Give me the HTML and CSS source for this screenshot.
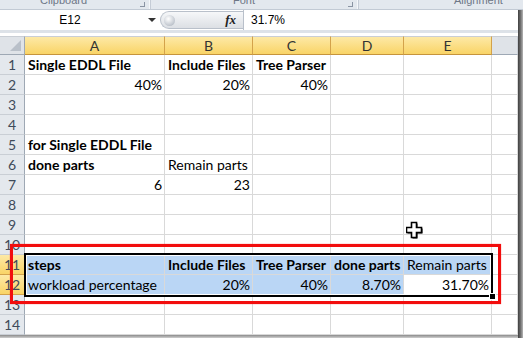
FILE: index.html
```html
<!DOCTYPE html>
<html lang="en">
<head>
    <meta charset="UTF-8">
    <title>Workload sheet</title>
    <link rel="stylesheet" href="styles.css">
</head>
<body>

    <div class="ribbon">
        <div class="group g-clip"><span class="label">Clipboard</span><span class="launcher"></span></div>
        <div class="group g-font"><span class="label">Font</span><span class="launcher"></span></div>
        <div class="group g-align"><span class="label">Alignment</span></div>
    </div>

    <div class="window">
        <div class="main">
            <div class="formula-bar">
                <div class="name-box"><span class="name">E12</span><span class="arrow"></span></div>
                <div class="grip"><span class="knob"></span><span class="fx">fx</span></div>
                <div class="formula">31.7%</div>
            </div>

            <div class="sheet">
                <div class="corner"><span class="tri"></span></div>
                <div class="ch">A</div><div class="ch">B</div><div class="ch">C</div><div class="ch">D</div><div class="ch">E</div><div class="ch plain"></div>

                <div class="rh">1</div><div class="c b">Single EDDL File</div><div class="c b">Include Files</div><div class="c b">Tree Parser</div><div class="c"></div><div class="c"></div><div class="c"></div>
                <div class="rh">2</div><div class="c r">40%</div><div class="c r">20%</div><div class="c r">40%</div><div class="c"></div><div class="c"></div><div class="c"></div>
                <div class="rh">3</div><div class="c"></div><div class="c"></div><div class="c"></div><div class="c"></div><div class="c"></div><div class="c"></div>
                <div class="rh">4</div><div class="c"></div><div class="c"></div><div class="c"></div><div class="c"></div><div class="c"></div><div class="c"></div>
                <div class="rh">5</div><div class="c b">for Single EDDL File</div><div class="c"></div><div class="c"></div><div class="c"></div><div class="c"></div><div class="c"></div>
                <div class="rh">6</div><div class="c b">done parts</div><div class="c">Remain parts</div><div class="c"></div><div class="c"></div><div class="c"></div><div class="c"></div>
                <div class="rh">7</div><div class="c r">6</div><div class="c r">23</div><div class="c"></div><div class="c"></div><div class="c"></div><div class="c"></div>
                <div class="rh">8</div><div class="c"></div><div class="c"></div><div class="c"></div><div class="c"></div><div class="c"></div><div class="c"></div>
                <div class="rh">9</div><div class="c"></div><div class="c"></div><div class="c"></div><div class="c"></div><div class="c"></div><div class="c"></div>
                <div class="rh">10</div><div class="c"></div><div class="c"></div><div class="c"></div><div class="c"></div><div class="c"></div><div class="c"></div>
                <div class="rh on">11</div><div class="c b sel">steps</div><div class="c b sel">Include Files</div><div class="c b sel">Tree Parser</div><div class="c b sel">done parts</div><div class="c sel">Remain parts</div><div class="c"></div>
                <div class="rh on">12</div><div class="c sel">workload percentage</div><div class="c r sel">20%</div><div class="c r sel">40%</div><div class="c r sel">8.70%</div><div class="c r">31.70%</div><div class="c"></div>
                <div class="rh">13</div><div class="c"></div><div class="c"></div><div class="c"></div><div class="c"></div><div class="c"></div><div class="c"></div>
                <div class="rh">14</div><div class="c"></div><div class="c"></div><div class="c"></div><div class="c"></div><div class="c"></div><div class="c"></div>

                <!-- selected range A11:E12 -->
                <div class="selection"><span class="handle"></span></div>
                <!-- red highlight drawn over the screenshot -->
                <div class="callout"></div>
                <!-- mouse pointer -->
                <svg class="cursor" width="18" height="18" viewBox="0 0 18 18">
                    <path d="M6.5 2.5h5v5h5v5h-5v5h-5v-5h-5v-5h5z" fill="#000"/>
                    <path d="M5.5 1.5h5v5h5v5h-5v5h-5v-5h-5v-5h5z" fill="#fff" stroke="#000" stroke-width="1.6"/>
                </svg>
            </div>
            <div class="shadow"></div>
        </div>
        <div class="edge"></div>
    </div>

</body>
</html>
```

FILE: styles.css
```css
body {
    margin: 0;
    width: 523px;
    height: 338px;
    overflow: hidden;
    background: #fff;
    font-family: "Lato", "Liberation Sans", sans-serif;
}

/* ribbon, only the bottom edge is visible */
.ribbon {
    display: flex;
    height: 9px;
    background: #e3e8ee;
    border-bottom: 1px solid #c2cad4;
    overflow: hidden;
    font: 11px "Liberation Sans", sans-serif;
    color: #6d7686;
}
.group {
    position: relative;
    box-sizing: border-box;
    border-right: 1px solid #c5ccd6;
    box-shadow: inset -1px 0 0 #f5f7fa;
}
.g-clip { width: 151px; padding-left: 40px; }
.g-font { width: 208px; padding-left: 82px; }
.g-align { flex: 1; padding-left: 95px; border-right: none; box-shadow: none; }
.label {
    display: block;
    margin-top: -7px;
    line-height: 14px;
}
.launcher {
    position: absolute;
    right: 5px;
    bottom: 2px;
    width: 4px;
    height: 4px;
    border-right: 1px solid #8a94a3;
    border-bottom: 1px solid #8a94a3;
}

.window {
    display: flex;
}
.main {
    width: 518px;
}
.edge {
    width: 5px;
    background: linear-gradient(to right, #3f3f3f, #6e6e6e 50%, #b5b5b5);
}

/* formula bar */
.formula-bar {
    display: flex;
    height: 20px;
    border-bottom: 3px solid #dde2e8;
    margin-bottom: 3px;
}
.name-box {
    width: 158px;
    display: flex;
    align-items: center;
    font: 12px "Liberation Sans", sans-serif;
    color: #000;
}
.name {
    width: 140px;
    text-align: center;
}
.arrow {
    margin-left: 8px;
    width: 0;
    height: 0;
    border-left: 4px solid transparent;
    border-right: 4px solid transparent;
    border-top: 4px solid #333;
}
.grip {
    width: 83px;
    height: 18px;
    margin-left: 2px;
    align-self: center;
    box-sizing: border-box;
    display: flex;
    align-items: center;
    border: 1px solid #b9c0ca;
    border-right: none;
    border-radius: 9px 0 0 9px;
    background: linear-gradient(#f6f7f9, #dcdfe4);
}
.knob {
    width: 11px;
    height: 11px;
    margin-left: 3px;
    border-radius: 50%;
    background: radial-gradient(circle at 40% 35%, #fff, #c9ced5 60%, #a3abb6);
}
.fx {
    margin-left: auto;
    margin-right: 7px;
    font: italic bold 13px "Liberation Serif", serif;
    color: #222;
}
.formula {
    flex: 1;
    border-left: 1px solid #b9c0ca;
    padding-left: 7px;
    font: 12px "Liberation Sans", sans-serif;
    line-height: 20px;
    color: #000;
}

/* grid */
.sheet {
    position: relative;
    display: grid;
    grid-template-columns: 25px 140px 88px 78px 73px 88px 26px;
    grid-template-rows: 19px repeat(14, 20px);
}
.sheet > div {
    box-sizing: border-box;
}
.corner {
    position: relative;
    background: #dfe3e8;
    border-top: 1px solid #c9ced5;
    border-right: 1px solid #9ea8b4;
    border-bottom: 1px solid #9ea8b4;
}
.tri {
    position: absolute;
    right: 3px;
    bottom: 3px;
    width: 0;
    height: 0;
    border-left: 11px solid transparent;
    border-bottom: 11px solid #b9c0c9;
}
.ch {
    text-align: center;
    font-size: 14px;
    line-height: 17px;
    color: #333;
    background: linear-gradient(#fde9a6, #f9d467);
    border-top: 1px solid #c9ced5;
    border-right: 1px solid #d3a24b;
    border-bottom: 1px solid #c6943c;
}
.ch.plain {
    background: #dfe3e8;
    border-right: 1px solid #c9ced5;
    border-bottom: 1px solid #9ea8b4;
}
.rh {
    text-align: center;
    font-size: 14px;
    line-height: 19px;
    color: #3f4b5a;
    background: #e4e8ed;
    border-right: 1px solid #9ea8b4;
    border-bottom: 1px solid #c9ced5;
}
.rh.on {
    background: linear-gradient(#fde9a6, #f9d467);
    border-right: 1px solid #c6943c;
    border-bottom: 1px solid #d3a24b;
}
.c {
    padding: 0 2px 0 3px;
    font-size: 14px;
    line-height: 19px;
    color: #000;
    white-space: nowrap;
    overflow: hidden;
    border-right: 1px solid #d9d9d9;
    border-bottom: 1px solid #d9d9d9;
}
.c.r {
    text-align: right;
}
.c.b {
    font-weight: bold;
}
.c.sel {
    background: #bad6f5;
}

.selection {
    position: absolute;
    left: 24px;
    top: 217px;
    width: 469px;
    height: 44px;
    box-sizing: border-box;
    border: 2px solid #000;
    box-shadow: inset 0 0 0 1px #fff;
}
.handle {
    position: absolute;
    right: -5px;
    bottom: -5px;
    width: 5px;
    height: 5px;
    background: #000;
    border: 1px solid #fff;
}
.callout {
    position: absolute;
    left: 10px;
    top: 208px;
    width: 491px;
    height: 60px;
    box-sizing: border-box;
    border: 3px solid #f20d0d;
    box-shadow: 0 0 1px rgba(255, 0, 0, 0.6);
}
.cursor {
    position: absolute;
    left: 406px;
    top: 185px;
}

.shadow {
    height: 3px;
    background: linear-gradient(#8a8a8a, #d0d0d0);
}
```
